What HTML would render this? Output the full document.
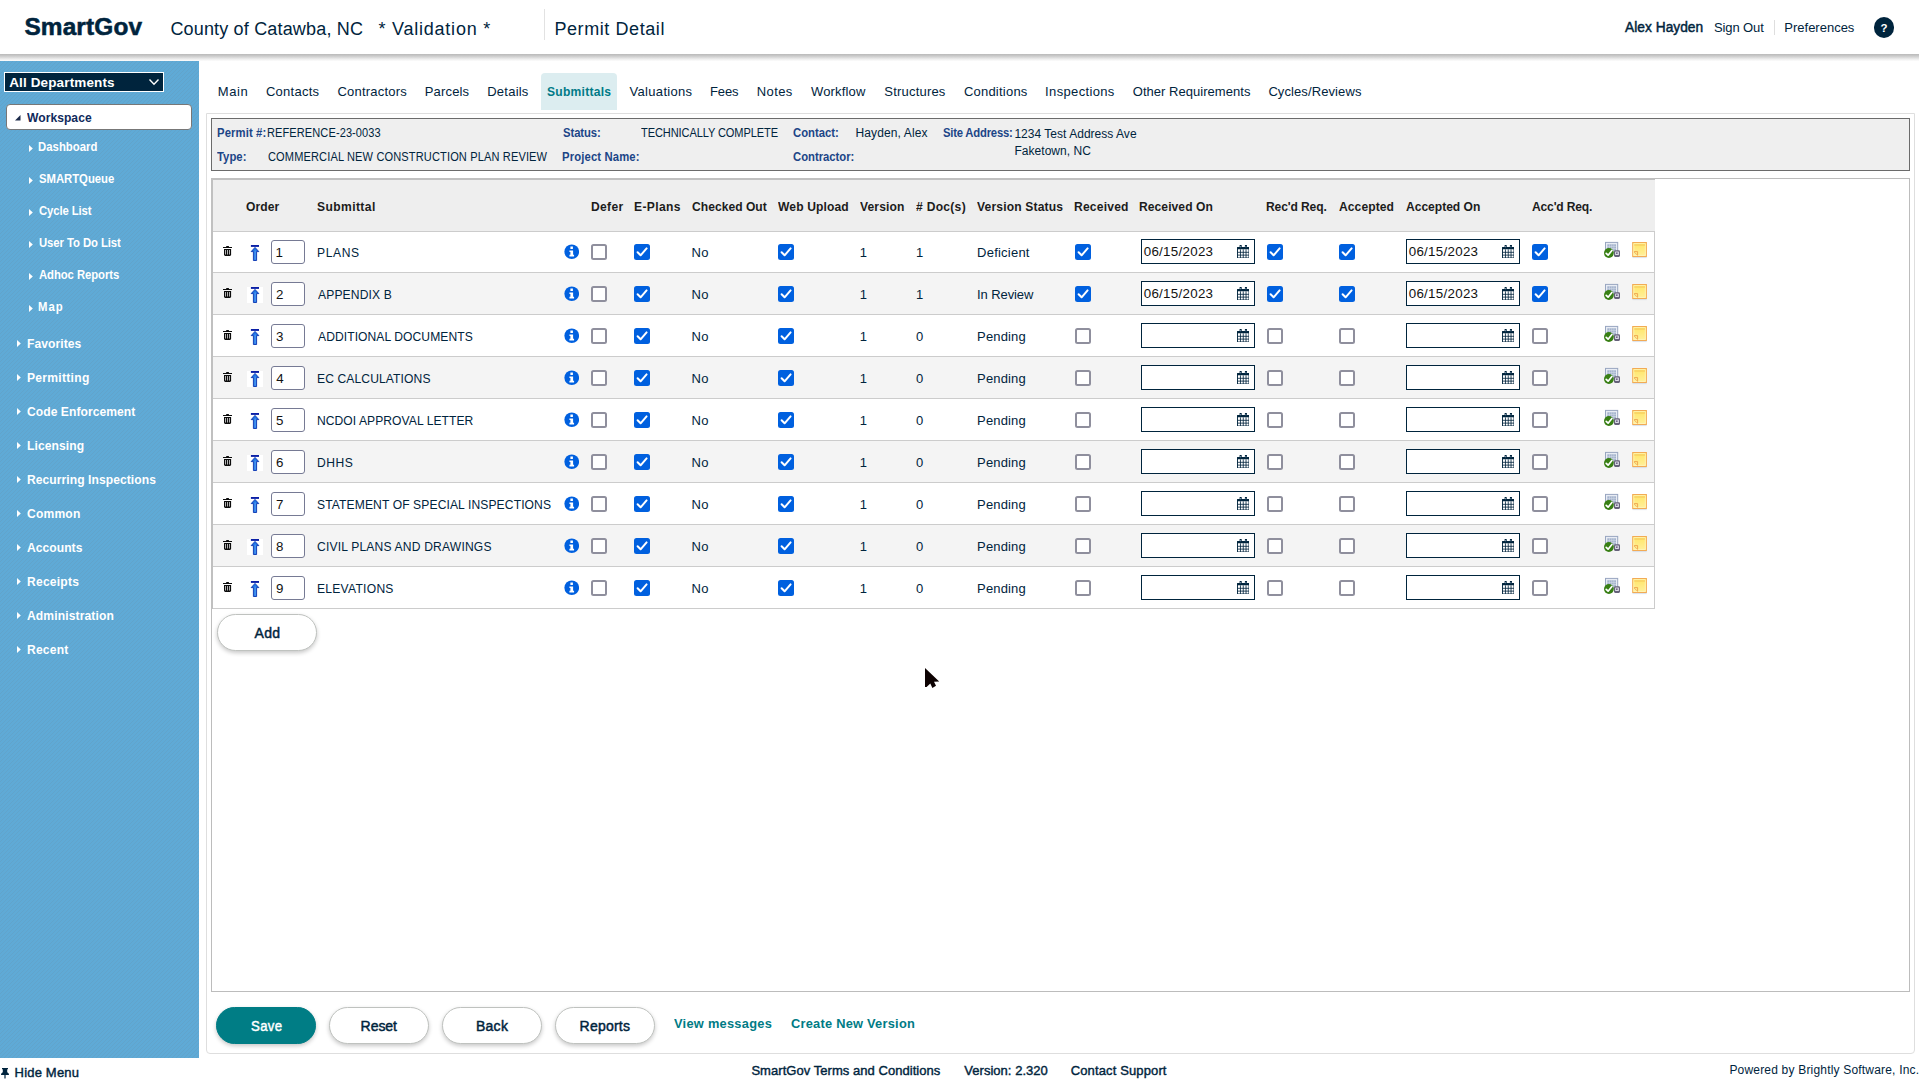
<!DOCTYPE html>
<html lang="en"><head><meta charset="utf-8"><title>Permit Detail</title>
<style>
html,body{margin:0;padding:0}
body{width:1919px;height:1079px;position:relative;overflow:hidden;background:#fff;
 font-family:"Liberation Sans",sans-serif;color:#00243d}
.t{position:absolute;white-space:pre;line-height:20px;display:block;transform-origin:0 50%}
.abs{position:absolute}
#hdr{position:absolute;left:0;top:0;width:1919px;height:54px;background:#fff}
#hsh{position:absolute;left:0;top:54px;width:1919px;height:7px;background:linear-gradient(to bottom,#bababa 0%,#c6c6c6 22%,#d9d9d9 48%,#eeeeee 74%,#fcfcfc 100%)}
#side{position:absolute;left:0;top:61px;width:199px;height:997px;background-color:#5faad6;
 background-image:repeating-linear-gradient(135deg,rgba(110,110,110,.10) 0,rgba(110,110,110,.10) .9px,rgba(0,0,0,0) .9px,rgba(0,0,0,0) 2.83px)}
.cb{position:absolute;width:16px;height:16px;box-sizing:border-box;border-radius:2.5px}
.cb.off{border:2px solid #8f8f9d;background:#fff}
.cb.on{background:#0060df}
.row{position:absolute;left:213px;width:1441px;border-bottom:1px solid #cccccc}
.inp{position:absolute;box-sizing:border-box;background:#fff}
.btn{position:absolute;box-sizing:border-box;height:37px;border-radius:19px;border:1px solid #bfc2bf;background:#fff;
 box-shadow:0 2px 4px rgba(0,0,0,.22)}
</style></head><body>

<svg width="0" height="0" style="position:absolute">
<defs>
<symbol id="chk" viewBox="0 0 16 16"><path d="M3.6 8.3l3 3L12.6 4.4" fill="none" stroke="#fff" stroke-width="2" stroke-linecap="round" stroke-linejoin="round"/></symbol>
<symbol id="trash" viewBox="0 0 9 10">
<path d="M3.2 0h2.700v1H9v1H0V1h3.200z" fill="#0c0c0c"/>
<path d="M1 3h7.100v6l-1 1H2L1 9z" fill="#0c0c0c"/>
<path d="M2.100 4.100h.800v4.500h-.800zM4.150 4.100h.8v4.500h-.8zM6.200 4.100h.8v4.500h-.8z" fill="#dcdcdc"/>
</symbol>
<symbol id="info" viewBox="0 0 16 16"><circle cx="8" cy="8" r="7.6" fill="#0060df"/>
<path d="M6.6 2.7h2.6v2.400H6.600zM5.600 6.600h3.800v4.600h1v1.700H5.600v-1.700h1V8.300h-1z" fill="#fff"/></symbol>
<symbol id="cal" viewBox="0 0 13 14">
<path d="M0.500 2.600h12v10.900h-12z" fill="#fff" stroke="#00243d" stroke-width="1"/>
<path d="M0 2.200h13v2.300H0z" fill="#00243d"/>
<path d="M2.700 0.700a1.100 1.100 0 0 1 2.200 0v2.400h-2.200zM8.200 0.700a1.100 1.100 0 0 1 2.200 0v2.400h-2.200z" fill="#00243d"/>
<path d="M3.400 0.900h.800v1.500h-.800zM8.900 0.900h.800v1.500h-.800z" fill="#9db4cc"/>
<path d="M3.600 4.500v9M6.500 4.500v9M9.400 4.500v9M0.500 7.600h12M0.500 10.500h12" stroke="#00243d" stroke-width=".85" fill="none"/>
</symbol>
<symbol id="up" viewBox="0 0 10 16">
<rect x="0.9" y="0" width="8.100" height="1.900" fill="#0a1fa6"/>
<path d="M5 2.400L8.800 6.600H6.600V15.500H3.400V6.600H1.200z" fill="#1c70e2" stroke="#0a34b0" stroke-width=".9" stroke-linejoin="round"/>
<path d="M5 4.200L5.800 6.200V14.800H4.500V6.200z" fill="#6ab4fa" opacity=".6"/>
</symbol>
<linearGradient id="ng" x1="0" y1="0" x2="0" y2="1"><stop offset="0" stop-color="#ffe566"/><stop offset="1" stop-color="#fff09c"/></linearGradient>
<symbol id="note" viewBox="0 0 17 18">
<rect x="1.500" y="16.100" width="14.200" height="1" fill="#c9d3e2" opacity=".7"/>
<rect x="1.700" y="1.500" width="13.700" height="14" fill="url(#ng)" stroke="#f2ab55" stroke-width="1"/>
<rect x="2.900" y="2.700" width="11.300" height="11.600" fill="none" stroke="#fff6c2" stroke-width=".7"/>
<rect x="3.200" y="3.500" width="10.800" height="1" fill="#f6c65c"/>
<path d="M3.100 10.600h3.500v3.900" fill="none" stroke="#eda04a" stroke-width=".9"/>
<path d="M3.300 11.200l2.900 2.900" fill="none" stroke="#e9964a" stroke-width=".9" stroke-dasharray="1 .5"/>
</symbol>
<symbol id="appr" viewBox="0 0 17 17">
<rect x="1.500" y="1.400" width="12.200" height="9.800" fill="#e8ecf4" stroke="#98a6c0" stroke-width="1"/>
<rect x="3.300" y="3.300" width="8.700" height="6.500" fill="#a3b2cc"/>
<path d="M5.500 3.300v6.500M7.700 3.300v6.500M9.900 3.300v6.500M3.300 5.400h8.700M3.300 7.500h8.700" stroke="#dfe5ee" stroke-width=".6" opacity=".8"/>
<rect x="10" y="9.300" width="6" height="6.600" rx="1.300" fill="#66627a"/>
<rect x="11.100" y="10.600" width="3.800" height="3.300" rx=".5" fill="#dcdce8"/>
<rect x="12.100" y="11.500" width="1.500" height="1.300" fill="#4b3a66"/>
<circle cx="4.900" cy="12" r="4.900" fill="#387f14"/>
<path d="M2.200 12.300l1.900 1.900L7.900 9.500" fill="none" stroke="#fff" stroke-width="1.700" stroke-linecap="round" stroke-linejoin="round"/>
</symbol>
</defs></svg>

<div id="hdr"></div><div id="hsh"></div>
<span class="t" style="left:24.38px;top:17.00px;font-size:24.4px;font-weight:700;color:#00243d;letter-spacing:0.155px;-webkit-text-stroke:0.55px #00243d;">SmartGov</span>
<span class="t" style="left:170.38px;top:19.00px;font-size:18px;font-weight:400;color:#00243d;letter-spacing:0.173px;">County of Catawba, NC</span>
<span class="t" style="left:378.45px;top:19.00px;font-size:18px;font-weight:400;color:#00243d;letter-spacing:0.775px;">* Validation *</span>
<div class="abs" style="left:544px;top:9px;width:1px;height:31px;background:#e2e2e2"></div>
<span class="t" style="left:554.42px;top:19.00px;font-size:18px;font-weight:400;color:#00243d;letter-spacing:0.581px;">Permit Detail</span>
<span class="t" style="left:1624.80px;top:17.00px;font-size:14px;font-weight:400;color:#00243d;letter-spacing:0.039px;transform:scaleX(0.98);-webkit-text-stroke:0.45px;">Alex Hayden</span>
<span class="t" style="left:1713.90px;top:18.00px;font-size:13px;font-weight:400;color:#00243d;letter-spacing:-0.085px;">Sign Out</span>
<div class="abs" style="left:1774px;top:20px;width:1px;height:15px;background:#dedede"></div>
<span class="t" style="left:1784.30px;top:18.00px;font-size:13px;font-weight:400;color:#00243d;letter-spacing:-0.002px;">Preferences</span>
<div class="abs" style="left:1873.500px;top:17px;width:20.500px;height:20.500px;border-radius:11px;background:#00243d"></div>
<span class="t" style="left:1880.50px;top:18.00px;font-size:11.5px;font-weight:700;color:#fff;">?</span>
<div id="side"></div>
<div class="abs" style="left:4px;top:72px;width:160px;height:20px;box-sizing:border-box;background:#00243d;border:1px solid #fff"></div>
<span class="t" style="left:9.25px;top:73.00px;font-size:13.5px;font-weight:700;color:#fff;letter-spacing:0.124px;">All Departments</span>
<svg class="abs" style="left:148px;top:77px" width="12" height="10" viewBox="0 0 12 10"><path d="M1.500 2.500L6 7.200l4.500-4.700" fill="none" stroke="#fff" stroke-width="1.400"/></svg>
<div class="abs" style="left:6px;top:104px;width:186px;height:26px;box-sizing:border-box;background:#fff;border:1px solid #777;border-radius:4px"></div>
<svg class="abs" style="left:15px;top:114.500px" width="6" height="6" viewBox="0 0 6 6"><path d="M5.500 0v5.500H0z" fill="#1c2b4a"/></svg>
<span class="t" style="left:27.20px;top:108.00px;font-size:13px;font-weight:700;color:#0f2a5c;letter-spacing:0.046px;transform:scaleX(0.93);">Workspace</span>
<svg class="abs" style="left:29px;top:144.5px" width="4" height="7" viewBox="0 0 4 7"><path d="M0 0L3.800 3.500 0 7z" fill="#fff"/></svg>
<span class="t" style="left:38.41px;top:137.00px;font-size:12.3px;font-weight:700;color:#fff;letter-spacing:0.053px;transform:scaleX(0.92);">Dashboard</span>
<svg class="abs" style="left:29px;top:176.5px" width="4" height="7" viewBox="0 0 4 7"><path d="M0 0L3.800 3.500 0 7z" fill="#fff"/></svg>
<span class="t" style="left:38.87px;top:169.00px;font-size:12.3px;font-weight:700;color:#fff;letter-spacing:-0.023px;transform:scaleX(0.92);">SMARTQueue</span>
<svg class="abs" style="left:29px;top:208.5px" width="4" height="7" viewBox="0 0 4 7"><path d="M0 0L3.800 3.500 0 7z" fill="#fff"/></svg>
<span class="t" style="left:38.64px;top:201.00px;font-size:12.3px;font-weight:700;color:#fff;letter-spacing:-0.109px;transform:scaleX(0.92);">Cycle List</span>
<svg class="abs" style="left:29px;top:240.5px" width="4" height="7" viewBox="0 0 4 7"><path d="M0 0L3.800 3.500 0 7z" fill="#fff"/></svg>
<span class="t" style="left:38.52px;top:233.00px;font-size:12.3px;font-weight:700;color:#fff;letter-spacing:-0.071px;transform:scaleX(0.92);">User To Do List</span>
<svg class="abs" style="left:29px;top:272.5px" width="4" height="7" viewBox="0 0 4 7"><path d="M0 0L3.800 3.500 0 7z" fill="#fff"/></svg>
<span class="t" style="left:38.87px;top:265.00px;font-size:12.3px;font-weight:700;color:#fff;letter-spacing:-0.076px;transform:scaleX(0.92);">Adhoc Reports</span>
<svg class="abs" style="left:29px;top:304.5px" width="4" height="7" viewBox="0 0 4 7"><path d="M0 0L3.800 3.500 0 7z" fill="#fff"/></svg>
<span class="t" style="left:38.41px;top:297.00px;font-size:12.3px;font-weight:700;color:#fff;letter-spacing:1.042px;transform:scaleX(0.92);">Map</span>
<svg class="abs" style="left:17px;top:339.5px" width="4" height="7" viewBox="0 0 4 7"><path d="M0 0L3.800 3.500 0 7z" fill="#fff"/></svg>
<span class="t" style="left:26.60px;top:334.00px;font-size:13px;font-weight:700;color:#fff;letter-spacing:0.079px;transform:scaleX(0.93);">Favorites</span>
<svg class="abs" style="left:17px;top:373.5px" width="4" height="7" viewBox="0 0 4 7"><path d="M0 0L3.800 3.500 0 7z" fill="#fff"/></svg>
<span class="t" style="left:26.60px;top:368.00px;font-size:13px;font-weight:700;color:#fff;letter-spacing:0.296px;transform:scaleX(0.93);">Permitting</span>
<svg class="abs" style="left:17px;top:407.5px" width="4" height="7" viewBox="0 0 4 7"><path d="M0 0L3.800 3.500 0 7z" fill="#fff"/></svg>
<span class="t" style="left:26.84px;top:402.00px;font-size:13px;font-weight:700;color:#fff;letter-spacing:0.054px;transform:scaleX(0.93);">Code Enforcement</span>
<svg class="abs" style="left:17px;top:441.5px" width="4" height="7" viewBox="0 0 4 7"><path d="M0 0L3.800 3.500 0 7z" fill="#fff"/></svg>
<span class="t" style="left:26.60px;top:436.00px;font-size:13px;font-weight:700;color:#fff;letter-spacing:0.098px;transform:scaleX(0.93);">Licensing</span>
<svg class="abs" style="left:17px;top:475.5px" width="4" height="7" viewBox="0 0 4 7"><path d="M0 0L3.800 3.500 0 7z" fill="#fff"/></svg>
<span class="t" style="left:26.60px;top:470.00px;font-size:13px;font-weight:700;color:#fff;letter-spacing:0.065px;transform:scaleX(0.93);">Recurring Inspections</span>
<svg class="abs" style="left:17px;top:509.5px" width="4" height="7" viewBox="0 0 4 7"><path d="M0 0L3.800 3.500 0 7z" fill="#fff"/></svg>
<span class="t" style="left:26.84px;top:504.00px;font-size:13px;font-weight:700;color:#fff;letter-spacing:0.198px;transform:scaleX(0.93);">Common</span>
<svg class="abs" style="left:17px;top:543.5px" width="4" height="7" viewBox="0 0 4 7"><path d="M0 0L3.800 3.500 0 7z" fill="#fff"/></svg>
<span class="t" style="left:27.07px;top:538.00px;font-size:13px;font-weight:700;color:#fff;letter-spacing:0.045px;transform:scaleX(0.93);">Accounts</span>
<svg class="abs" style="left:17px;top:577.5px" width="4" height="7" viewBox="0 0 4 7"><path d="M0 0L3.800 3.500 0 7z" fill="#fff"/></svg>
<span class="t" style="left:26.60px;top:572.00px;font-size:13px;font-weight:700;color:#fff;letter-spacing:0.238px;transform:scaleX(0.93);">Receipts</span>
<svg class="abs" style="left:17px;top:611.5px" width="4" height="7" viewBox="0 0 4 7"><path d="M0 0L3.800 3.500 0 7z" fill="#fff"/></svg>
<span class="t" style="left:27.07px;top:606.00px;font-size:13px;font-weight:700;color:#fff;letter-spacing:0.130px;transform:scaleX(0.93);">Administration</span>
<svg class="abs" style="left:17px;top:645.5px" width="4" height="7" viewBox="0 0 4 7"><path d="M0 0L3.800 3.500 0 7z" fill="#fff"/></svg>
<span class="t" style="left:26.60px;top:640.00px;font-size:13px;font-weight:700;color:#fff;letter-spacing:0.206px;transform:scaleX(0.93);">Recent</span>
<svg class="abs" style="left:0px;top:1067.500px" width="10" height="11" viewBox="0 0 10 11"><path d="M2 0h6v1.300H7.200v3c1 .5 1.800 1.400 1.800 2.600H5.600V10l-.6 1-.6-1V6.900H1c0-1.200.8-2.100 1.800-2.600v-3H2z" fill="#00243d"/></svg>
<span class="t" style="left:14.60px;top:1063.00px;font-size:13px;font-weight:400;color:#00243d;letter-spacing:0.186px;-webkit-text-stroke:0.4px;">Hide Menu</span>
<div class="abs" style="left:541px;top:73px;width:76px;height:37px;background:#dcedf0;border-radius:4px 4px 0 0"></div>
<span class="t" style="left:217.75px;top:82.00px;font-size:13px;font-weight:400;color:#00243d;letter-spacing:0.601px;">Main</span>
<span class="t" style="left:265.88px;top:82.00px;font-size:13px;font-weight:400;color:#00243d;letter-spacing:0.278px;">Contacts</span>
<span class="t" style="left:337.38px;top:82.00px;font-size:13px;font-weight:400;color:#00243d;letter-spacing:0.231px;">Contractors</span>
<span class="t" style="left:424.75px;top:82.00px;font-size:13px;font-weight:400;color:#00243d;letter-spacing:0.171px;">Parcels</span>
<span class="t" style="left:487.25px;top:82.00px;font-size:13px;font-weight:400;color:#00243d;letter-spacing:0.231px;">Details</span>
<span class="t" style="left:547.15px;top:82.00px;font-size:13px;font-weight:700;color:#007a87;letter-spacing:0.268px;transform:scaleX(0.93);">Submittals</span>
<span class="t" style="left:629.50px;top:82.00px;font-size:13px;font-weight:400;color:#00243d;letter-spacing:0.320px;">Valuations</span>
<span class="t" style="left:710.00px;top:82.00px;font-size:13px;font-weight:400;color:#00243d;letter-spacing:-0.092px;">Fees</span>
<span class="t" style="left:756.75px;top:82.00px;font-size:13px;font-weight:400;color:#00243d;letter-spacing:0.416px;">Notes</span>
<span class="t" style="left:811.00px;top:82.00px;font-size:13px;font-weight:400;color:#00243d;letter-spacing:0.168px;">Workflow</span>
<span class="t" style="left:884.25px;top:82.00px;font-size:13px;font-weight:400;color:#00243d;letter-spacing:0.209px;">Structures</span>
<span class="t" style="left:963.88px;top:82.00px;font-size:13px;font-weight:400;color:#00243d;letter-spacing:0.230px;">Conditions</span>
<span class="t" style="left:1045.12px;top:82.00px;font-size:13px;font-weight:400;color:#00243d;letter-spacing:0.349px;">Inspections</span>
<span class="t" style="left:1132.75px;top:82.00px;font-size:13px;font-weight:400;color:#00243d;letter-spacing:0.034px;">Other Requirements</span>
<span class="t" style="left:1268.38px;top:82.00px;font-size:13px;font-weight:400;color:#00243d;letter-spacing:0.097px;">Cycles/Reviews</span>
<div class="abs" style="left:206px;top:113px;width:1709px;height:941px;box-sizing:border-box;border:1px solid #dedede;border-radius:0 0 4px 4px"></div>
<div class="abs" style="left:211px;top:118px;width:1699px;height:53px;box-sizing:border-box;border:1px solid #6b6b6b;background:#efefef"></div>
<div class="abs" style="left:211px;top:178px;width:1699px;height:814px;box-sizing:border-box;border:1px solid #bcbcbc"></div>
<span class="t" style="left:216.79px;top:123.00px;font-size:12px;font-weight:700;color:#1c4587;letter-spacing:0.131px;transform:scaleX(0.94);">Permit #:</span>
<span class="t" style="left:267.19px;top:123.00px;font-size:12px;font-weight:400;color:#00243d;letter-spacing:0.096px;transform:scaleX(0.92);">REFERENCE-23-0033</span>
<span class="t" style="left:217.38px;top:147.00px;font-size:12px;font-weight:700;color:#1c4587;letter-spacing:0.047px;transform:scaleX(0.94);">Type:</span>
<span class="t" style="left:267.54px;top:147.00px;font-size:12px;font-weight:400;color:#00243d;letter-spacing:0.150px;transform:scaleX(0.92);">COMMERCIAL NEW CONSTRUCTION PLAN REVIEW</span>
<span class="t" style="left:562.51px;top:123.00px;font-size:12px;font-weight:700;color:#1c4587;letter-spacing:-0.078px;transform:scaleX(0.94);">Status:</span>
<span class="t" style="left:640.87px;top:123.00px;font-size:12px;font-weight:400;color:#00243d;letter-spacing:-0.106px;transform:scaleX(0.92);">TECHNICALLY COMPLETE</span>
<span class="t" style="left:562.04px;top:147.00px;font-size:12px;font-weight:700;color:#1c4587;letter-spacing:0.147px;transform:scaleX(0.94);">Project Name:</span>
<span class="t" style="left:793.25px;top:123.00px;font-size:12px;font-weight:700;color:#1c4587;letter-spacing:0.010px;transform:scaleX(0.94);">Contact:</span>
<span class="t" style="left:855.52px;top:123.00px;font-size:12px;font-weight:400;color:#00243d;letter-spacing:0.121px;">Hayden, Alex</span>
<span class="t" style="left:793.25px;top:147.00px;font-size:12px;font-weight:700;color:#1c4587;letter-spacing:-0.011px;transform:scaleX(0.94);">Contractor:</span>
<span class="t" style="left:943.37px;top:123.00px;font-size:12px;font-weight:700;color:#1c4587;letter-spacing:-0.224px;transform:scaleX(0.94);">Site Address:</span>
<span class="t" style="left:1014.42px;top:124.00px;font-size:12px;font-weight:400;color:#00243d;letter-spacing:0.026px;">1234 Test Address Ave</span>
<span class="t" style="left:1014.42px;top:141.00px;font-size:12px;font-weight:400;color:#00243d;letter-spacing:0.042px;">Faketown, NC</span>
<div class="abs" style="left:211px;top:178px;width:1444px;height:431px;box-sizing:border-box;border-left:2px solid #c0c0c0;border-top:2px solid #c0c0c0"></div>
<div class="abs" style="left:213px;top:180px;width:1442px;height:51px;background:#eeeeee;border-bottom:1px solid #cccccc"></div>
<div class="abs" style="left:1654px;top:232px;width:1px;height:377px;background:#cccccc"></div>
<span class="t" style="left:246.44px;top:197.00px;font-size:13px;font-weight:700;color:#1c1c1c;letter-spacing:0.057px;transform:scaleX(0.93);">Order</span>
<span class="t" style="left:316.55px;top:197.00px;font-size:13px;font-weight:700;color:#1c1c1c;letter-spacing:0.426px;transform:scaleX(0.93);">Submittal</span>
<span class="t" style="left:590.55px;top:197.00px;font-size:13px;font-weight:700;color:#1c1c1c;letter-spacing:0.325px;transform:scaleX(0.93);">Defer</span>
<span class="t" style="left:633.55px;top:197.00px;font-size:13px;font-weight:700;color:#1c1c1c;letter-spacing:0.367px;transform:scaleX(0.93);">E-Plans</span>
<span class="t" style="left:691.53px;top:197.00px;font-size:13px;font-weight:700;color:#1c1c1c;letter-spacing:0.023px;transform:scaleX(0.93);">Checked Out</span>
<span class="t" style="left:778.00px;top:197.00px;font-size:13px;font-weight:700;color:#1c1c1c;letter-spacing:0.135px;transform:scaleX(0.93);">Web Upload</span>
<span class="t" style="left:860.00px;top:197.00px;font-size:13px;font-weight:700;color:#1c1c1c;letter-spacing:0.128px;transform:scaleX(0.93);">Version</span>
<span class="t" style="left:915.88px;top:197.00px;font-size:13px;font-weight:700;color:#1c1c1c;letter-spacing:0.300px;transform:scaleX(0.93);"># Doc(s)</span>
<span class="t" style="left:977.00px;top:197.00px;font-size:13px;font-weight:700;color:#1c1c1c;letter-spacing:0.162px;transform:scaleX(0.93);">Version Status</span>
<span class="t" style="left:1074.30px;top:197.00px;font-size:13px;font-weight:700;color:#1c1c1c;letter-spacing:0.209px;transform:scaleX(0.93);">Received</span>
<span class="t" style="left:1139.30px;top:197.00px;font-size:13px;font-weight:700;color:#1c1c1c;letter-spacing:0.064px;transform:scaleX(0.93);">Received On</span>
<span class="t" style="left:1265.55px;top:197.00px;font-size:13px;font-weight:700;color:#1c1c1c;letter-spacing:-0.149px;transform:scaleX(0.93);">Rec&#x27;d Req.</span>
<span class="t" style="left:1338.77px;top:197.00px;font-size:13px;font-weight:700;color:#1c1c1c;letter-spacing:0.087px;transform:scaleX(0.93);">Accepted</span>
<span class="t" style="left:1406.02px;top:197.00px;font-size:13px;font-weight:700;color:#1c1c1c;letter-spacing:-0.026px;transform:scaleX(0.93);">Accepted On</span>
<span class="t" style="left:1532.07px;top:197.00px;font-size:13px;font-weight:700;color:#1c1c1c;letter-spacing:-0.187px;transform:scaleX(0.93);">Acc&#x27;d Req.</span>
<div class="row" style="top:232px;height:40px;background:#fff"></div>
<svg class="abs" style="left:223px;top:246px" width="9" height="10"><use href="#trash"/></svg>
<svg class="abs" style="left:250px;top:245px" width="10" height="16"><use href="#up"/></svg>
<div class="inp" style="left:271px;top:240px;width:34px;height:24px;border:1px solid #767a94;border-radius:3px"></div>
<span class="t" style="left:275.50px;top:243.00px;font-size:13.33px;font-weight:400;color:#111;">1</span>
<span class="t" style="left:316.87px;top:243.00px;font-size:13px;font-weight:400;color:#00243d;letter-spacing:0.643px;transform:scaleX(0.93);">PLANS</span>
<svg class="abs" style="left:563.5px;top:244px" width="15.5" height="15.5"><use href="#info"/></svg>
<div class="cb off" style="left:591px;top:244px"></div>
<div class="cb on" style="left:634px;top:244px"><svg width="16" height="16" style="display:block"><use href="#chk"/></svg></div>
<span class="t" style="left:691.50px;top:243.00px;font-size:13px;font-weight:400;color:#00243d;letter-spacing:0.362px;">No</span>
<div class="cb on" style="left:778px;top:244px"><svg width="16" height="16" style="display:block"><use href="#chk"/></svg></div>
<span class="t" style="left:859.73px;top:243.00px;font-size:13px;font-weight:400;color:#00243d;">1</span>
<span class="t" style="left:916.12px;top:243.00px;font-size:13px;font-weight:400;color:#00243d;">1</span>
<span class="t" style="left:977.10px;top:243.00px;font-size:13px;font-weight:400;color:#00243d;letter-spacing:0.226px;">Deficient</span>
<div class="cb on" style="left:1075px;top:244px"><svg width="16" height="16" style="display:block"><use href="#chk"/></svg></div>
<div class="inp" style="left:1141px;top:239px;width:114px;height:25px;border:1px solid #00243d"></div>
<span class="t" style="left:1143.70px;top:242.00px;font-size:13.33px;font-weight:400;color:#111;letter-spacing:0.292px;">06/15/2023</span>
<svg class="abs" style="left:1236.5px;top:244.8px" width="12.5" height="13.5"><use href="#cal"/></svg>
<div class="cb on" style="left:1267px;top:244px"><svg width="16" height="16" style="display:block"><use href="#chk"/></svg></div>
<div class="cb on" style="left:1339px;top:244px"><svg width="16" height="16" style="display:block"><use href="#chk"/></svg></div>
<div class="inp" style="left:1406px;top:239px;width:114px;height:25px;border:1px solid #00243d"></div>
<span class="t" style="left:1408.70px;top:242.00px;font-size:13.33px;font-weight:400;color:#111;letter-spacing:0.292px;">06/15/2023</span>
<svg class="abs" style="left:1501.5px;top:244.8px" width="12.5" height="13.5"><use href="#cal"/></svg>
<div class="cb on" style="left:1532px;top:244px"><svg width="16" height="16" style="display:block"><use href="#chk"/></svg></div>
<svg class="abs" style="left:1604px;top:241px" width="17" height="17"><use href="#appr"/></svg>
<svg class="abs" style="left:1631px;top:241px" width="17" height="18"><use href="#note"/></svg>
<div class="row" style="top:273px;height:41px;background:#f4f4f4"></div>
<svg class="abs" style="left:223px;top:288px" width="9" height="10"><use href="#trash"/></svg>
<div class="abs" style="left:247px;top:287px;width:16px;height:16px;background:#fff"></div>
<svg class="abs" style="left:250px;top:287px" width="10" height="16"><use href="#up"/></svg>
<div class="inp" style="left:271px;top:282px;width:34px;height:24px;border:1px solid #767a94;border-radius:3px"></div>
<span class="t" style="left:275.88px;top:285.00px;font-size:13.33px;font-weight:400;color:#111;">2</span>
<span class="t" style="left:317.80px;top:285.00px;font-size:13px;font-weight:400;color:#00243d;letter-spacing:0.151px;transform:scaleX(0.93);">APPENDIX B</span>
<svg class="abs" style="left:563.5px;top:286px" width="15.5" height="15.5"><use href="#info"/></svg>
<div class="cb off" style="left:591px;top:286px"></div>
<div class="cb on" style="left:634px;top:286px"><svg width="16" height="16" style="display:block"><use href="#chk"/></svg></div>
<span class="t" style="left:691.50px;top:285.00px;font-size:13px;font-weight:400;color:#00243d;letter-spacing:0.362px;">No</span>
<div class="cb on" style="left:778px;top:286px"><svg width="16" height="16" style="display:block"><use href="#chk"/></svg></div>
<span class="t" style="left:859.73px;top:285.00px;font-size:13px;font-weight:400;color:#00243d;">1</span>
<span class="t" style="left:916.12px;top:285.00px;font-size:13px;font-weight:400;color:#00243d;">1</span>
<span class="t" style="left:976.98px;top:285.00px;font-size:13px;font-weight:400;color:#00243d;letter-spacing:-0.083px;">In Review</span>
<div class="cb on" style="left:1075px;top:286px"><svg width="16" height="16" style="display:block"><use href="#chk"/></svg></div>
<div class="inp" style="left:1141px;top:281px;width:114px;height:25px;border:1px solid #00243d"></div>
<span class="t" style="left:1143.70px;top:284.00px;font-size:13.33px;font-weight:400;color:#111;letter-spacing:0.292px;">06/15/2023</span>
<svg class="abs" style="left:1236.5px;top:286.8px" width="12.5" height="13.5"><use href="#cal"/></svg>
<div class="cb on" style="left:1267px;top:286px"><svg width="16" height="16" style="display:block"><use href="#chk"/></svg></div>
<div class="cb on" style="left:1339px;top:286px"><svg width="16" height="16" style="display:block"><use href="#chk"/></svg></div>
<div class="inp" style="left:1406px;top:281px;width:114px;height:25px;border:1px solid #00243d"></div>
<span class="t" style="left:1408.70px;top:284.00px;font-size:13.33px;font-weight:400;color:#111;letter-spacing:0.292px;">06/15/2023</span>
<svg class="abs" style="left:1501.5px;top:286.8px" width="12.5" height="13.5"><use href="#cal"/></svg>
<div class="cb on" style="left:1532px;top:286px"><svg width="16" height="16" style="display:block"><use href="#chk"/></svg></div>
<svg class="abs" style="left:1604px;top:283px" width="17" height="17"><use href="#appr"/></svg>
<svg class="abs" style="left:1631px;top:283px" width="17" height="18"><use href="#note"/></svg>
<div class="row" style="top:315px;height:41px;background:#fff"></div>
<svg class="abs" style="left:223px;top:330px" width="9" height="10"><use href="#trash"/></svg>
<svg class="abs" style="left:250px;top:329px" width="10" height="16"><use href="#up"/></svg>
<div class="inp" style="left:271px;top:324px;width:34px;height:24px;border:1px solid #767a94;border-radius:3px"></div>
<span class="t" style="left:276.00px;top:327.00px;font-size:13.33px;font-weight:400;color:#111;">3</span>
<span class="t" style="left:317.80px;top:327.00px;font-size:13px;font-weight:400;color:#00243d;letter-spacing:0.078px;transform:scaleX(0.93);">ADDITIONAL DOCUMENTS</span>
<svg class="abs" style="left:563.5px;top:328px" width="15.5" height="15.5"><use href="#info"/></svg>
<div class="cb off" style="left:591px;top:328px"></div>
<div class="cb on" style="left:634px;top:328px"><svg width="16" height="16" style="display:block"><use href="#chk"/></svg></div>
<span class="t" style="left:691.50px;top:327.00px;font-size:13px;font-weight:400;color:#00243d;letter-spacing:0.362px;">No</span>
<div class="cb on" style="left:778px;top:328px"><svg width="16" height="16" style="display:block"><use href="#chk"/></svg></div>
<span class="t" style="left:859.73px;top:327.00px;font-size:13px;font-weight:400;color:#00243d;">1</span>
<span class="t" style="left:916.10px;top:327.00px;font-size:13px;font-weight:400;color:#00243d;">0</span>
<span class="t" style="left:977.10px;top:327.00px;font-size:13px;font-weight:400;color:#00243d;letter-spacing:0.153px;">Pending</span>
<div class="cb off" style="left:1075px;top:328px"></div>
<div class="inp" style="left:1141px;top:323px;width:114px;height:25px;border:1px solid #00243d"></div>
<svg class="abs" style="left:1236.5px;top:328.8px" width="12.5" height="13.5"><use href="#cal"/></svg>
<div class="cb off" style="left:1267px;top:328px"></div>
<div class="cb off" style="left:1339px;top:328px"></div>
<div class="inp" style="left:1406px;top:323px;width:114px;height:25px;border:1px solid #00243d"></div>
<svg class="abs" style="left:1501.5px;top:328.8px" width="12.5" height="13.5"><use href="#cal"/></svg>
<div class="cb off" style="left:1532px;top:328px"></div>
<svg class="abs" style="left:1604px;top:325px" width="17" height="17"><use href="#appr"/></svg>
<svg class="abs" style="left:1631px;top:325px" width="17" height="18"><use href="#note"/></svg>
<div class="row" style="top:357px;height:41px;background:#f4f4f4"></div>
<svg class="abs" style="left:223px;top:372px" width="9" height="10"><use href="#trash"/></svg>
<div class="abs" style="left:247px;top:371px;width:16px;height:16px;background:#fff"></div>
<svg class="abs" style="left:250px;top:371px" width="10" height="16"><use href="#up"/></svg>
<div class="inp" style="left:271px;top:366px;width:34px;height:24px;border:1px solid #767a94;border-radius:3px"></div>
<span class="t" style="left:276.25px;top:369.00px;font-size:13.33px;font-weight:400;color:#111;">4</span>
<span class="t" style="left:316.87px;top:369.00px;font-size:13px;font-weight:400;color:#00243d;letter-spacing:0.113px;transform:scaleX(0.93);">EC CALCULATIONS</span>
<svg class="abs" style="left:563.5px;top:370px" width="15.5" height="15.5"><use href="#info"/></svg>
<div class="cb off" style="left:591px;top:370px"></div>
<div class="cb on" style="left:634px;top:370px"><svg width="16" height="16" style="display:block"><use href="#chk"/></svg></div>
<span class="t" style="left:691.50px;top:369.00px;font-size:13px;font-weight:400;color:#00243d;letter-spacing:0.362px;">No</span>
<div class="cb on" style="left:778px;top:370px"><svg width="16" height="16" style="display:block"><use href="#chk"/></svg></div>
<span class="t" style="left:859.73px;top:369.00px;font-size:13px;font-weight:400;color:#00243d;">1</span>
<span class="t" style="left:916.10px;top:369.00px;font-size:13px;font-weight:400;color:#00243d;">0</span>
<span class="t" style="left:977.10px;top:369.00px;font-size:13px;font-weight:400;color:#00243d;letter-spacing:0.153px;">Pending</span>
<div class="cb off" style="left:1075px;top:370px"></div>
<div class="inp" style="left:1141px;top:365px;width:114px;height:25px;border:1px solid #00243d"></div>
<svg class="abs" style="left:1236.5px;top:370.8px" width="12.5" height="13.5"><use href="#cal"/></svg>
<div class="cb off" style="left:1267px;top:370px"></div>
<div class="cb off" style="left:1339px;top:370px"></div>
<div class="inp" style="left:1406px;top:365px;width:114px;height:25px;border:1px solid #00243d"></div>
<svg class="abs" style="left:1501.5px;top:370.8px" width="12.5" height="13.5"><use href="#cal"/></svg>
<div class="cb off" style="left:1532px;top:370px"></div>
<svg class="abs" style="left:1604px;top:367px" width="17" height="17"><use href="#appr"/></svg>
<svg class="abs" style="left:1631px;top:367px" width="17" height="18"><use href="#note"/></svg>
<div class="row" style="top:399px;height:41px;background:#fff"></div>
<svg class="abs" style="left:223px;top:414px" width="9" height="10"><use href="#trash"/></svg>
<svg class="abs" style="left:250px;top:413px" width="10" height="16"><use href="#up"/></svg>
<div class="inp" style="left:271px;top:408px;width:34px;height:24px;border:1px solid #767a94;border-radius:3px"></div>
<span class="t" style="left:276.00px;top:411.00px;font-size:13.33px;font-weight:400;color:#111;">5</span>
<span class="t" style="left:316.87px;top:411.00px;font-size:13px;font-weight:400;color:#00243d;letter-spacing:0.059px;transform:scaleX(0.93);">NCDOI APPROVAL LETTER</span>
<svg class="abs" style="left:563.5px;top:412px" width="15.5" height="15.5"><use href="#info"/></svg>
<div class="cb off" style="left:591px;top:412px"></div>
<div class="cb on" style="left:634px;top:412px"><svg width="16" height="16" style="display:block"><use href="#chk"/></svg></div>
<span class="t" style="left:691.50px;top:411.00px;font-size:13px;font-weight:400;color:#00243d;letter-spacing:0.362px;">No</span>
<div class="cb on" style="left:778px;top:412px"><svg width="16" height="16" style="display:block"><use href="#chk"/></svg></div>
<span class="t" style="left:859.73px;top:411.00px;font-size:13px;font-weight:400;color:#00243d;">1</span>
<span class="t" style="left:916.10px;top:411.00px;font-size:13px;font-weight:400;color:#00243d;">0</span>
<span class="t" style="left:977.10px;top:411.00px;font-size:13px;font-weight:400;color:#00243d;letter-spacing:0.153px;">Pending</span>
<div class="cb off" style="left:1075px;top:412px"></div>
<div class="inp" style="left:1141px;top:407px;width:114px;height:25px;border:1px solid #00243d"></div>
<svg class="abs" style="left:1236.5px;top:412.8px" width="12.5" height="13.5"><use href="#cal"/></svg>
<div class="cb off" style="left:1267px;top:412px"></div>
<div class="cb off" style="left:1339px;top:412px"></div>
<div class="inp" style="left:1406px;top:407px;width:114px;height:25px;border:1px solid #00243d"></div>
<svg class="abs" style="left:1501.5px;top:412.8px" width="12.5" height="13.5"><use href="#cal"/></svg>
<div class="cb off" style="left:1532px;top:412px"></div>
<svg class="abs" style="left:1604px;top:409px" width="17" height="17"><use href="#appr"/></svg>
<svg class="abs" style="left:1631px;top:409px" width="17" height="18"><use href="#note"/></svg>
<div class="row" style="top:441px;height:41px;background:#f4f4f4"></div>
<svg class="abs" style="left:223px;top:456px" width="9" height="10"><use href="#trash"/></svg>
<div class="abs" style="left:247px;top:455px;width:16px;height:16px;background:#fff"></div>
<svg class="abs" style="left:250px;top:455px" width="10" height="16"><use href="#up"/></svg>
<div class="inp" style="left:271px;top:450px;width:34px;height:24px;border:1px solid #767a94;border-radius:3px"></div>
<span class="t" style="left:275.88px;top:453.00px;font-size:13.33px;font-weight:400;color:#111;">6</span>
<span class="t" style="left:316.87px;top:453.00px;font-size:13px;font-weight:400;color:#00243d;letter-spacing:0.567px;transform:scaleX(0.93);">DHHS</span>
<svg class="abs" style="left:563.5px;top:454px" width="15.5" height="15.5"><use href="#info"/></svg>
<div class="cb off" style="left:591px;top:454px"></div>
<div class="cb on" style="left:634px;top:454px"><svg width="16" height="16" style="display:block"><use href="#chk"/></svg></div>
<span class="t" style="left:691.50px;top:453.00px;font-size:13px;font-weight:400;color:#00243d;letter-spacing:0.362px;">No</span>
<div class="cb on" style="left:778px;top:454px"><svg width="16" height="16" style="display:block"><use href="#chk"/></svg></div>
<span class="t" style="left:859.73px;top:453.00px;font-size:13px;font-weight:400;color:#00243d;">1</span>
<span class="t" style="left:916.10px;top:453.00px;font-size:13px;font-weight:400;color:#00243d;">0</span>
<span class="t" style="left:977.10px;top:453.00px;font-size:13px;font-weight:400;color:#00243d;letter-spacing:0.153px;">Pending</span>
<div class="cb off" style="left:1075px;top:454px"></div>
<div class="inp" style="left:1141px;top:449px;width:114px;height:25px;border:1px solid #00243d"></div>
<svg class="abs" style="left:1236.5px;top:454.8px" width="12.5" height="13.5"><use href="#cal"/></svg>
<div class="cb off" style="left:1267px;top:454px"></div>
<div class="cb off" style="left:1339px;top:454px"></div>
<div class="inp" style="left:1406px;top:449px;width:114px;height:25px;border:1px solid #00243d"></div>
<svg class="abs" style="left:1501.5px;top:454.8px" width="12.5" height="13.5"><use href="#cal"/></svg>
<div class="cb off" style="left:1532px;top:454px"></div>
<svg class="abs" style="left:1604px;top:451px" width="17" height="17"><use href="#appr"/></svg>
<svg class="abs" style="left:1631px;top:451px" width="17" height="18"><use href="#note"/></svg>
<div class="row" style="top:483px;height:41px;background:#fff"></div>
<svg class="abs" style="left:223px;top:498px" width="9" height="10"><use href="#trash"/></svg>
<svg class="abs" style="left:250px;top:497px" width="10" height="16"><use href="#up"/></svg>
<div class="inp" style="left:271px;top:492px;width:34px;height:24px;border:1px solid #767a94;border-radius:3px"></div>
<span class="t" style="left:275.88px;top:495.00px;font-size:13.33px;font-weight:400;color:#111;">7</span>
<span class="t" style="left:317.34px;top:495.00px;font-size:13px;font-weight:400;color:#00243d;letter-spacing:0.117px;transform:scaleX(0.93);">STATEMENT OF SPECIAL INSPECTIONS</span>
<svg class="abs" style="left:563.5px;top:496px" width="15.5" height="15.5"><use href="#info"/></svg>
<div class="cb off" style="left:591px;top:496px"></div>
<div class="cb on" style="left:634px;top:496px"><svg width="16" height="16" style="display:block"><use href="#chk"/></svg></div>
<span class="t" style="left:691.50px;top:495.00px;font-size:13px;font-weight:400;color:#00243d;letter-spacing:0.362px;">No</span>
<div class="cb on" style="left:778px;top:496px"><svg width="16" height="16" style="display:block"><use href="#chk"/></svg></div>
<span class="t" style="left:859.73px;top:495.00px;font-size:13px;font-weight:400;color:#00243d;">1</span>
<span class="t" style="left:916.10px;top:495.00px;font-size:13px;font-weight:400;color:#00243d;">0</span>
<span class="t" style="left:977.10px;top:495.00px;font-size:13px;font-weight:400;color:#00243d;letter-spacing:0.153px;">Pending</span>
<div class="cb off" style="left:1075px;top:496px"></div>
<div class="inp" style="left:1141px;top:491px;width:114px;height:25px;border:1px solid #00243d"></div>
<svg class="abs" style="left:1236.5px;top:496.8px" width="12.5" height="13.5"><use href="#cal"/></svg>
<div class="cb off" style="left:1267px;top:496px"></div>
<div class="cb off" style="left:1339px;top:496px"></div>
<div class="inp" style="left:1406px;top:491px;width:114px;height:25px;border:1px solid #00243d"></div>
<svg class="abs" style="left:1501.5px;top:496.8px" width="12.5" height="13.5"><use href="#cal"/></svg>
<div class="cb off" style="left:1532px;top:496px"></div>
<svg class="abs" style="left:1604px;top:493px" width="17" height="17"><use href="#appr"/></svg>
<svg class="abs" style="left:1631px;top:493px" width="17" height="18"><use href="#note"/></svg>
<div class="row" style="top:525px;height:41px;background:#f4f4f4"></div>
<svg class="abs" style="left:223px;top:540px" width="9" height="10"><use href="#trash"/></svg>
<div class="abs" style="left:247px;top:539px;width:16px;height:16px;background:#fff"></div>
<svg class="abs" style="left:250px;top:539px" width="10" height="16"><use href="#up"/></svg>
<div class="inp" style="left:271px;top:534px;width:34px;height:24px;border:1px solid #767a94;border-radius:3px"></div>
<span class="t" style="left:276.00px;top:537.00px;font-size:13.33px;font-weight:400;color:#111;">8</span>
<span class="t" style="left:317.22px;top:537.00px;font-size:13px;font-weight:400;color:#00243d;letter-spacing:0.190px;transform:scaleX(0.93);">CIVIL PLANS AND DRAWINGS</span>
<svg class="abs" style="left:563.5px;top:538px" width="15.5" height="15.5"><use href="#info"/></svg>
<div class="cb off" style="left:591px;top:538px"></div>
<div class="cb on" style="left:634px;top:538px"><svg width="16" height="16" style="display:block"><use href="#chk"/></svg></div>
<span class="t" style="left:691.50px;top:537.00px;font-size:13px;font-weight:400;color:#00243d;letter-spacing:0.362px;">No</span>
<div class="cb on" style="left:778px;top:538px"><svg width="16" height="16" style="display:block"><use href="#chk"/></svg></div>
<span class="t" style="left:859.73px;top:537.00px;font-size:13px;font-weight:400;color:#00243d;">1</span>
<span class="t" style="left:916.10px;top:537.00px;font-size:13px;font-weight:400;color:#00243d;">0</span>
<span class="t" style="left:977.10px;top:537.00px;font-size:13px;font-weight:400;color:#00243d;letter-spacing:0.153px;">Pending</span>
<div class="cb off" style="left:1075px;top:538px"></div>
<div class="inp" style="left:1141px;top:533px;width:114px;height:25px;border:1px solid #00243d"></div>
<svg class="abs" style="left:1236.5px;top:538.8px" width="12.5" height="13.5"><use href="#cal"/></svg>
<div class="cb off" style="left:1267px;top:538px"></div>
<div class="cb off" style="left:1339px;top:538px"></div>
<div class="inp" style="left:1406px;top:533px;width:114px;height:25px;border:1px solid #00243d"></div>
<svg class="abs" style="left:1501.5px;top:538.8px" width="12.5" height="13.5"><use href="#cal"/></svg>
<div class="cb off" style="left:1532px;top:538px"></div>
<svg class="abs" style="left:1604px;top:535px" width="17" height="17"><use href="#appr"/></svg>
<svg class="abs" style="left:1631px;top:535px" width="17" height="18"><use href="#note"/></svg>
<div class="row" style="top:567px;height:41px;background:#fff"></div>
<svg class="abs" style="left:223px;top:582px" width="9" height="10"><use href="#trash"/></svg>
<svg class="abs" style="left:250px;top:581px" width="10" height="16"><use href="#up"/></svg>
<div class="inp" style="left:271px;top:576px;width:34px;height:24px;border:1px solid #767a94;border-radius:3px"></div>
<span class="t" style="left:275.88px;top:579.00px;font-size:13.33px;font-weight:400;color:#111;">9</span>
<span class="t" style="left:316.87px;top:579.00px;font-size:13px;font-weight:400;color:#00243d;letter-spacing:0.276px;transform:scaleX(0.93);">ELEVATIONS</span>
<svg class="abs" style="left:563.5px;top:580px" width="15.5" height="15.5"><use href="#info"/></svg>
<div class="cb off" style="left:591px;top:580px"></div>
<div class="cb on" style="left:634px;top:580px"><svg width="16" height="16" style="display:block"><use href="#chk"/></svg></div>
<span class="t" style="left:691.50px;top:579.00px;font-size:13px;font-weight:400;color:#00243d;letter-spacing:0.362px;">No</span>
<div class="cb on" style="left:778px;top:580px"><svg width="16" height="16" style="display:block"><use href="#chk"/></svg></div>
<span class="t" style="left:859.73px;top:579.00px;font-size:13px;font-weight:400;color:#00243d;">1</span>
<span class="t" style="left:916.10px;top:579.00px;font-size:13px;font-weight:400;color:#00243d;">0</span>
<span class="t" style="left:977.10px;top:579.00px;font-size:13px;font-weight:400;color:#00243d;letter-spacing:0.153px;">Pending</span>
<div class="cb off" style="left:1075px;top:580px"></div>
<div class="inp" style="left:1141px;top:575px;width:114px;height:25px;border:1px solid #00243d"></div>
<svg class="abs" style="left:1236.5px;top:580.8px" width="12.5" height="13.5"><use href="#cal"/></svg>
<div class="cb off" style="left:1267px;top:580px"></div>
<div class="cb off" style="left:1339px;top:580px"></div>
<div class="inp" style="left:1406px;top:575px;width:114px;height:25px;border:1px solid #00243d"></div>
<svg class="abs" style="left:1501.5px;top:580.8px" width="12.5" height="13.5"><use href="#cal"/></svg>
<div class="cb off" style="left:1532px;top:580px"></div>
<svg class="abs" style="left:1604px;top:577px" width="17" height="17"><use href="#appr"/></svg>
<svg class="abs" style="left:1631px;top:577px" width="17" height="18"><use href="#note"/></svg>
<div class="btn" style="left:217px;top:614px;width:100px"></div>
<span class="t" style="left:254.60px;top:623.00px;font-size:14px;font-weight:400;color:#00243d;letter-spacing:0.238px;-webkit-text-stroke:0.45px;">Add</span>
<div class="btn" style="left:216px;top:1007px;width:100px;background:#007d85;border-color:#007d85"></div>
<span class="t" style="left:250.66px;top:1016.00px;font-size:14px;font-weight:400;color:#fff;letter-spacing:0.389px;transform:scaleX(0.94);-webkit-text-stroke:0.45px;">Save</span>
<div class="btn" style="left:329px;top:1007px;width:100px"></div>
<span class="t" style="left:360.62px;top:1016.00px;font-size:14px;font-weight:400;color:#00243d;letter-spacing:-0.046px;-webkit-text-stroke:0.45px;">Reset</span>
<div class="btn" style="left:442px;top:1007px;width:100px"></div>
<span class="t" style="left:475.88px;top:1016.00px;font-size:14px;font-weight:400;color:#00243d;letter-spacing:0.292px;-webkit-text-stroke:0.45px;">Back</span>
<div class="btn" style="left:555px;top:1007px;width:100px"></div>
<span class="t" style="left:579.62px;top:1016.00px;font-size:14px;font-weight:400;color:#00243d;letter-spacing:0.226px;-webkit-text-stroke:0.45px;">Reports</span>
<span class="t" style="left:673.90px;top:1014.00px;font-size:13.5px;font-weight:700;color:#007b85;letter-spacing:0.280px;transform:scaleX(0.95);">View messages</span>
<span class="t" style="left:791.12px;top:1014.00px;font-size:13.5px;font-weight:700;color:#007b85;letter-spacing:0.250px;transform:scaleX(0.95);">Create New Version</span>
<span class="t" style="left:751.40px;top:1061.00px;font-size:13px;font-weight:400;color:#00243d;letter-spacing:0.047px;-webkit-text-stroke:0.4px;">SmartGov Terms and Conditions</span>
<span class="t" style="left:964.30px;top:1061.00px;font-size:13px;font-weight:400;color:#00243d;letter-spacing:0.028px;-webkit-text-stroke:0.4px;">Version: 2.320</span>
<span class="t" style="left:1070.67px;top:1061.00px;font-size:13px;font-weight:400;color:#00243d;letter-spacing:0.133px;-webkit-text-stroke:0.4px;">Contact Support</span>
<span class="t" style="left:1729.42px;top:1060.00px;font-size:12px;font-weight:400;color:#00243d;letter-spacing:0.189px;">Powered by Brightly Software, Inc.</span>
<svg class="abs" style="left:924px;top:667px" width="18" height="24" viewBox="0 0 18 24"><path d="M1 1L15.200 14.400L10 14.700L12 18.800L8.400 21L6.300 16.400L2.600 20.100H1z" fill="#0d0202"/></svg>
</body></html>
